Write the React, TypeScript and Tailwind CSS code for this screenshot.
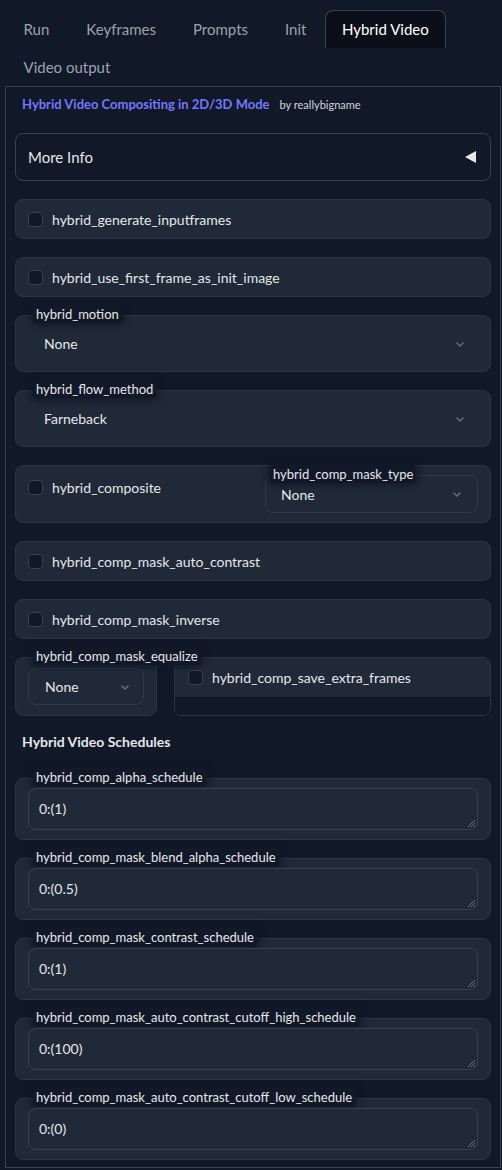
import type { ReactNode } from 'react';

const font = { fontFamily: '"Source Sans Pro", Lato, "Noto Sans", sans-serif' };

const tabs = ['Run', 'Keyframes', 'Prompts', 'Init', 'Hybrid Video', 'Video output'];

const schedules = [
  ['hybrid_comp_alpha_schedule', '0:(1)'],
  ['hybrid_comp_mask_blend_alpha_schedule', '0:(0.5)'],
  ['hybrid_comp_mask_contrast_schedule', '0:(1)'],
  ['hybrid_comp_mask_auto_contrast_cutoff_high_schedule', '0:(100)'],
  ['hybrid_comp_mask_auto_contrast_cutoff_low_schedule', '0:(0)'],
];

function Chevron() {
  return (
    <svg width="12" height="12" viewBox="0 0 12 12" className="shrink-0">
      <path d="M2.5 4.5 L6 8 L9.5 4.5" fill="none" stroke="#6b7280" strokeWidth="1.3" />
    </svg>
  );
}

function Box() {
  return <span className="block w-[15px] h-[15px] rounded-[4px] bg-[#111827] border border-[#374151] shrink-0" />;
}

function Label({ children, className = 'left-[17px]' }: { children: ReactNode; className?: string }) {
  return (
    <span
      className={`absolute -top-[11px] ${className} px-[3px] text-[13px] leading-[18px] text-[#e5e7eb] bg-[#111827] rounded shadow-[0_0_6px_2px_#111827]`}
    >
      {children}
    </span>
  );
}

function CheckRow({ label }: { label: string }) {
  return (
    <div className="h-10 rounded-lg bg-[#1f2937] border border-[#2b3544] flex items-center gap-[9px] pl-[12px] text-[14px] text-[#e5e7eb]">
      <Box />
      <span>{label}</span>
    </div>
  );
}

function SelectBlock({ label, value }: { label: string; value: string }) {
  return (
    <div className="relative h-[57px] rounded-lg bg-[#1f2937] border border-[#2b3544] flex items-center justify-between pl-[28px] pr-[24px] text-[14px] text-[#e5e7eb]">
      <Label>{label}</Label>
      <span>{value}</span>
      <Chevron />
    </div>
  );
}

function Schedule({ label, value }: { label: string; value: string }) {
  return (
    <div className="relative h-[62px] rounded-lg bg-[#1f2937] border border-[#2b3544] pt-[9px] px-[12px]">
      <Label>{label}</Label>
      <div className="relative h-[42px] rounded-lg border border-[#374151] bg-[#1f2937] pl-[10px] pt-[10px] text-[14px] leading-[20px] text-[#e5e7eb]">
        {value}
        <svg width="10" height="10" viewBox="0 0 10 10" className="absolute right-[1px] bottom-[1px]">
          <path d="M9 2 L2 9 M9 5 L5 9 M9 8 L8 9" stroke="#6b7280" strokeWidth="1" />
        </svg>
      </div>
    </div>
  );
}

export default function App() {
  return (
    <div className="w-[502px] h-[1170px] bg-[#111827] overflow-hidden" style={font}>
      {/* Tabs */}
      <div className="flex flex-wrap pl-[5px] pt-[10px] h-[86px] text-[15px]">
        {tabs.map((t) => (
          <div
            key={t}
            className={
              t === 'Hybrid Video'
                ? 'h-[38px] px-[16px] flex items-center rounded-t-lg border border-b-0 border-[#374151] bg-[#0b0f19] text-white'
                : 'h-[38px] px-[17.5px] flex items-center text-[#9ca3af] border border-transparent'
            }
          >
            {t}
          </div>
        ))}
      </div>

      {/* Panel */}
      <div className="ml-[5px] mr-[1px] h-[1082px] border border-[#374151] px-[9px] pt-[9px]">
        <div className="flex items-baseline gap-[10px] pl-[7px] h-4 leading-4">
          <span className="text-[13px] font-bold text-[#7676ff]">Hybrid Video Compositing in 2D/3D Mode</span>
          <span className="text-[11px] text-[#d1d5db]">by reallybigname</span>
        </div>

        <div className="mt-[21px] flex flex-col gap-[18px]">
          <div className="h-12 rounded-lg border border-[#374151] flex items-center justify-between pl-[12px] pr-[14px] text-[15px] text-[#e5e7eb]">
            <span>More Info</span>
            <svg width="11" height="12" viewBox="0 0 11 12">
              <path d="M0 6 L11 0 L11 12 Z" fill="#e5e7eb" />
            </svg>
          </div>

          <CheckRow label="hybrid_generate_inputframes" />
          <CheckRow label="hybrid_use_first_frame_as_init_image" />
          <SelectBlock label="hybrid_motion" value="None" />
          <SelectBlock label="hybrid_flow_method" value="Farneback" />

          {/* composite + mask type */}
          <div className="h-[58px] rounded-lg bg-[#1f2937] border border-[#2b3544] flex pl-[12px] pr-[12px] pt-[9px] text-[14px] text-[#e5e7eb]">
            <div className="flex-1 flex items-center gap-[9px] h-[22px] mt-[1px]">
              <Box />
              <span>hybrid_composite</span>
            </div>
            <div className="relative w-[213px] h-[38px] rounded-lg border border-[#2f3a4a] flex items-center justify-between pl-[15px] pr-[14px]">
              <Label className="left-[4px]">hybrid_comp_mask_type</Label>
              <span>None</span>
              <Chevron />
            </div>
          </div>

          <CheckRow label="hybrid_comp_mask_auto_contrast" />
          <CheckRow label="hybrid_comp_mask_inverse" />

          {/* equalize + save extra frames */}
          <div className="flex gap-[17px] h-[59px] text-[14px] text-[#e5e7eb]">
            <div className="relative w-[142px] rounded-lg bg-[#1f2937] border border-[#2b3544] px-[12px] pt-[10px]">
              <Label>hybrid_comp_mask_equalize</Label>
              <div className="h-[37px] rounded-lg border border-[#2f3a4a] flex items-center justify-between pl-[16px] pr-[12px]">
                <span>None</span>
                <Chevron />
              </div>
            </div>
            <div className="flex-1 rounded-lg border border-[#2b3544] overflow-hidden flex flex-col">
              <div className="h-[39px] bg-[#1f2937] flex items-center gap-[9px] pl-[13px]">
                <Box />
                <span>hybrid_comp_save_extra_frames</span>
              </div>
              <div className="flex-1 bg-[#111827]" />
            </div>
          </div>

          <div className="pl-[7px] -mt-[1px] text-[14px] font-bold text-[#e5e7eb] leading-[18px]">Hybrid Video Schedules</div>

          <div className="mt-[9px] flex flex-col gap-[18px]">
            {schedules.map(([l, v]) => (
              <Schedule key={l} label={l} value={v} />
            ))}
          </div>
        </div>
      </div>
    </div>
  );
}
